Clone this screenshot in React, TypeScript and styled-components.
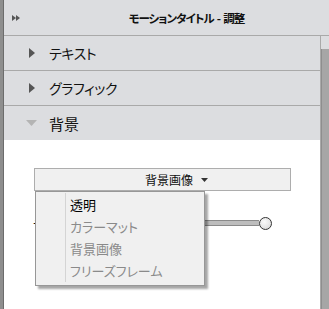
import React from "react";
import styled, { createGlobalStyle } from "styled-components";

const GlobalStyle = createGlobalStyle`
  html, body { margin: 0; padding: 0; background: #ffffff; }
  body {
    font-family: "Noto Sans CJK JP", "Noto Sans", sans-serif;
    font-feature-settings: "palt";
  }
  * { box-sizing: border-box; }
`;

const Frame = styled.div`
  display: flex;
  width: 329px;
  height: 309px;
  overflow: hidden;
`;

const LeftEdge = styled.div`
  width: 4px;
  flex: none;
  background: linear-gradient(to right, #8e8e8e 0, #8e8e8e 3px, #6c6c6c 3px, #6c6c6c 4px);
`;

const Main = styled.div`
  flex: 1;
  display: flex;
  flex-direction: column;
  min-width: 0;
`;

const Header = styled.div`
  height: 36px;
  flex: none;
  display: flex;
  align-items: center;
  padding-left: 8px;
  background: #dcdde0;
  border-bottom: 1px solid #a9a9a9;
`;

const Title = styled.div`
  flex: 1;
  text-align: center;
  padding-left: 24px;
  font-size: 11.5px;
  font-weight: 700;
  color: #111;
  letter-spacing: -1px;
  white-space: pre;
`;

const Body = styled.div`
  flex: 1;
  display: flex;
  min-height: 0;
`;

const Content = styled.div`
  flex: 1;
  display: flex;
  flex-direction: column;
`;

const ScrollTrack = styled.div`
  width: 9px;
  flex: none;
  display: flex;
  flex-direction: column;
  padding-top: 13px;
  background: #dcdde0;
  border-left: 1px solid #a9a9a9;
`;

const ScrollThumb = styled.div`
  flex: 1;
  background: #a6a6a6;
  border-left: 1px solid #8e8e8e;
`;

const SectionRow = styled.div<{ $last?: boolean }>`
  height: ${(p) => (p.$last ? 34 : 35)}px;
  flex: none;
  display: flex;
  align-items: center;
  padding-left: 22px;
  background: #dcdde0;
  border-bottom: ${(p) => (p.$last ? "none" : "1px solid #a9a9a9")};
`;

const ArrowBox = styled.span`
  width: 11px;
  height: 11px;
  display: flex;
  align-items: center;
  justify-content: center;
  margin-right: 12px;
`;

const SectionLabel = styled.span<{ $big?: boolean }>`
  font-size: ${(p) => (p.$big ? 15 : 14)}px;
  color: #111;
  line-height: 1;
  letter-spacing: ${(p) => (p.$big ? 0 : -0.4)}px;
`;

const Pane = styled.div`
  flex: 1;
  background: #ffffff;
  padding: 28px 29px 0 30px;
  display: flex;
  flex-direction: column;
`;

const DropWrap = styled.div`
  position: relative;
`;

const DropButton = styled.div`
  height: 23px;
  display: flex;
  align-items: center;
  justify-content: center;
  gap: 8px;
  padding-left: 28px;
  background: #f0f0f0;
  border: 1px solid #adadad;
  font-size: 12px;
  color: #111;
`;

const Menu = styled.div`
  position: absolute;
  top: 100%;
  left: 1px;
  width: 170px;
  height: 95px;
  padding: 1px 0 3px 0;
  background: #f0f0f0;
  border: 1px solid #979797;
  box-shadow: 3px 3px 2px rgba(0, 0, 0, 0.35);
  z-index: 2;
`;

const ItemList = styled.div`
  margin-left: 29px;
  height: 100%;
  border-left: 1px solid #d4d4d4;
  display: flex;
  flex-direction: column;
`;

const MenuItem = styled.div<{ $active?: boolean }>`
  height: 22px;
  display: flex;
  align-items: center;
  padding-left: 4px;
  font-size: 13px;
  color: ${(p) => (p.$active ? "#000" : "#8a8a8a")};
`;

const SliderRow = styled.div`
  margin-top: 23px;
  height: 18px;
  display: flex;
  align-items: center;
  padding-right: 19px;
`;

const SliderLabel = styled.span`
  font-size: 13px;
  color: #111;
  margin-left: -1px;
  margin-right: 8px;
`;

const Track = styled.div`
  flex: 1;
  height: 6px;
  background: #bdbdbd;
  border-top: 1px solid #8a8a8a;
  border-bottom: 1px solid #8a8a8a;
`;

const Knob = styled.div`
  width: 13px;
  height: 13px;
  flex: none;
  border-radius: 50%;
  border: 1px solid #333;
  background: radial-gradient(circle at 40% 35%, #fafafa 0, #e6e6e6 55%, #cfcfcf 100%);
`;

const RightArrow = () => (
  <svg width="6" height="10" viewBox="0 0 6 10">
    <polygon points="0,0 6,5 0,10" fill="#555" />
  </svg>
);

const DownArrow = () => (
  <svg width="11" height="6" viewBox="0 0 11 6">
    <polygon points="0,0 11,0 5.5,6" fill="#b4b4b4" />
  </svg>
);

const SmallDown = () => (
  <svg width="7" height="4" viewBox="0 0 7 4">
    <polygon points="0,0 7,0 3.5,4" fill="#333" />
  </svg>
);

const DoubleArrow = () => (
  <svg width="8" height="6" viewBox="0 0 8 6">
    <polygon points="0,0 4,3 0,6" fill="#555" />
    <polygon points="4,0 8,3 4,6" fill="#555" />
  </svg>
);

const options = ["透明", "カラーマット", "背景画像", "フリーズフレーム"];

export default function App() {
  return (
    <>
      <GlobalStyle />
      <Frame>
        <LeftEdge />
        <Main>
          <Header>
            <DoubleArrow />
            <Title>モーションタイトル  -  調整</Title>
          </Header>
          <Body>
            <Content>
              <SectionRow>
                <ArrowBox>
                  <RightArrow />
                </ArrowBox>
                <SectionLabel>テキスト</SectionLabel>
              </SectionRow>
              <SectionRow>
                <ArrowBox>
                  <RightArrow />
                </ArrowBox>
                <SectionLabel>グラフィック</SectionLabel>
              </SectionRow>
              <SectionRow $last>
                <ArrowBox>
                  <DownArrow />
                </ArrowBox>
                <SectionLabel $big>背景</SectionLabel>
              </SectionRow>
              <Pane>
                <DropWrap>
                  <DropButton>
                    <span>背景画像</span>
                    <SmallDown />
                  </DropButton>
                  <Menu>
                    <ItemList>
                      {options.map((o, i) => (
                        <MenuItem key={o} $active={i === 0}>
                          {o}
                        </MenuItem>
                      ))}
                    </ItemList>
                  </Menu>
                </DropWrap>
                <SliderRow>
                  <SliderLabel>テクスチャ</SliderLabel>
                  <Track />
                  <Knob />
                </SliderRow>
              </Pane>
            </Content>
            <ScrollTrack>
              <ScrollThumb />
            </ScrollTrack>
          </Body>
        </Main>
      </Frame>
    </>
  );
}
